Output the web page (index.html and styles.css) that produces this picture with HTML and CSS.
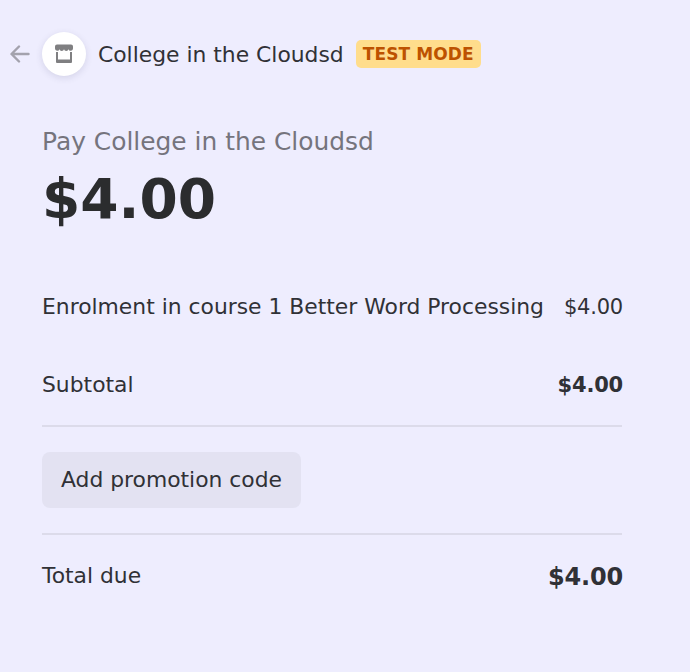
FILE: index.html
```html
<!DOCTYPE html>
<html lang="en">
<head>
    <meta charset="UTF-8">
    <meta name="viewport" content="width=device-width, initial-scale=1.0">
    <title>Checkout</title>
    <link rel="stylesheet" href="styles.css">
</head>
<body>
    <div class="checkout">
        <header class="header">
            <a href="#" class="back" aria-label="Back">
                <svg width="20" height="18" viewBox="0 0 20 18" fill="none" stroke="#a3a2ad" stroke-width="2.4" stroke-linecap="round" stroke-linejoin="round">
                    <path d="M18.500 9H2M9 1.500L1.500 9 9 16.500"/>
                </svg>
            </a>
            <div class="logo">
                <svg width="20" height="20" viewBox="0 0 20 20" fill="#7f7f81">
                    <path d="M3 .5h14a2 2 0 0 1 2 2v2a2.300 2.300 0 0 1-4.500.7 2.300 2.300 0 0 1-4.500 0 2.300 2.300 0 0 1-4.500 0A2.300 2.300 0 0 1 1 4.500v-2a2 2 0 0 1 2-2z"/>
                    <path d="M2 8h2v7.500h12V8h2v10a1 1 0 0 1-1 1H3a1 1 0 0 1-1-1z"/>
                </svg>
            </div>
            <span class="merchant">College in the Cloudsd</span>
            <span class="badge">TEST MODE</span>
        </header>

        <main class="summary">
            <div class="title">Pay College in the Cloudsd</div>
            <div class="amount">$4.00</div>

            <div class="row item">
                <span class="label">Enrolment in course 1 Better Word Processing</span>
                <span class="price">$4.00</span>
            </div>
            <div class="row subtotal">
                <span class="label">Subtotal</span>
                <strong class="price">$4.00</strong>
            </div>
            <div class="promo">
                <button class="promo-btn">Add promotion code</button>
            </div>
            <div class="row total">
                <span class="label">Total due</span>
                <strong class="price">$4.00</strong>
            </div>
        </main>
    </div>
</body>
</html>
```
FILE: styles.css
```css
* {
    box-sizing: border-box;
}
body {
    margin: 0;
    background-color: #eeedfe;
    color: #303136;
    font-family: "DejaVu Sans", sans-serif;
    font-size: 21.85px;
}
.checkout {
    width: 622px;
    padding-top: 32px;
}
.header {
    display: flex;
    align-items: center;
    height: 44px;
    padding-left: 10px;
}
.back {
    display: flex;
    width: 32px;
}
.logo {
    display: flex;
    align-items: center;
    justify-content: center;
    width: 44px;
    height: 44px;
    border-radius: 50%;
    background-color: #fff;
    box-shadow: 0 2px 7px rgba(60, 60, 100, 0.14);
}
.merchant {
    margin-left: 12px;
    white-space: nowrap;
}
.badge {
    margin-left: 12px;
    padding: 0 7px;
    height: 28px;
    line-height: 29px;
    border-radius: 5px;
    background-color: #ffdd8c;
    color: #bd5200;
    font-size: 17px;
    font-weight: bold;
    letter-spacing: 0.1px;
    white-space: nowrap;
}
.summary {
    padding-left: 42px;
}
.title {
    margin-top: 50px;
    color: #75747d;
    font-size: 24.9px;
    line-height: 32px;
}
.amount {
    margin-top: 8px;
    color: #2b2c2e;
    font-size: 55px;
    font-weight: bold;
    line-height: 66px;
}
.row {
    display: flex;
    align-items: center;
    justify-content: space-between;
    white-space: nowrap;
}
.item {
    height: 30px;
    margin-top: 60px;
}
.label {
    padding-bottom: 2px;
}
.price {
    margin-right: -1px;
    font-size: 21px;
    letter-spacing: -0.2px;
}
.subtotal {
    height: 80px;
    margin-top: 23px;
}
.promo {
    padding: 25px 0;
    border-top: 2px solid #dcdbea;
    border-bottom: 2px solid #dcdbea;
}
.promo-btn {
    display: block;
    width: 259px;
    height: 56px;
    padding: 0 0 2px;
    border: none;
    border-radius: 8px;
    background-color: #e3e2f2;
    color: inherit;
    font: inherit;
}
.total {
    height: 83px;
}
.total .price {
    font-size: 24px;
}
```
